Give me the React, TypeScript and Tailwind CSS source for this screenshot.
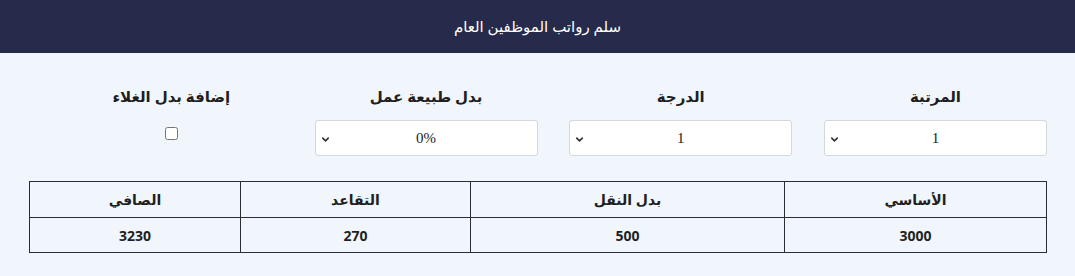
import { ChevronDown } from "lucide-react";

const FIELDS = [
  { label: "المرتبة", value: "1" },
  { label: "الدرجة", value: "1" },
  { label: "بدل طبيعة عمل", value: "0%" },
];

const COLS = [
  { head: "الأساسي", val: "3000", w: "w-[262px]" },
  { head: "بدل النقل", val: "500", w: "w-[314px]" },
  { head: "التقاعد", val: "270", w: "w-[230px]" },
  { head: "الصافي", val: "3230", w: "w-[211px]" },
];

function Select({ value }: { value: string }) {
  return (
    <div className="relative h-[36px] w-[223px] rounded-[3px] border border-[#d4d7dc] bg-white">
      <div className="flex h-full items-center justify-center font-['Liberation_Serif',serif] text-[15px] text-[#222]">
        {value}
      </div>
      <ChevronDown
        className="absolute left-[4px] top-[13px] h-[11px] w-[11px] text-[#333]"
        strokeWidth={3.5}
      />
    </div>
  );
}

export default function App() {
  return (
    <div dir="rtl" className="min-h-[276px] bg-[#f1f6fd] font-['Noto_Sans','DejaVu_Sans',sans-serif] text-[#1f1f1f]">
      <header className="flex h-[53px] items-center justify-center bg-[#262a4b] text-[15px] text-white">
        سلم رواتب الموظفين العام
      </header>

      <div className="mr-[28px] ml-[28px] pt-[32px]">
        <div className="grid grid-cols-4">
          {FIELDS.map((f) => (
            <div key={f.label} className="flex w-[223px] flex-col items-center">
              <div className="h-[25px] text-[15px] font-bold">{f.label}</div>
              <div className="mt-[10px]">
                <Select value={f.value} />
              </div>
            </div>
          ))}
          <div className="flex w-[223px] flex-col items-center">
            <div className="h-[25px] text-[15px] font-bold">إضافة بدل الغلاء</div>
            <input type="checkbox" className="mt-[17px] h-[13px] w-[13px]" />
          </div>
        </div>

        <table className="mt-[25px] border-collapse text-[14px] font-bold">
          <thead>
            <tr>
              {COLS.map((c) => (
                <th key={c.head} className={`${c.w} h-[36px] border border-[#2a2c3a] p-0 text-center font-bold`}>
                  {c.head}
                </th>
              ))}
            </tr>
          </thead>
          <tbody>
            <tr>
              {COLS.map((c) => (
                <td key={c.head} className="h-[35px] border border-[#2a2c3a] p-0 text-center">
                  {c.val}
                </td>
              ))}
            </tr>
          </tbody>
        </table>
      </div>
    </div>
  );
}
